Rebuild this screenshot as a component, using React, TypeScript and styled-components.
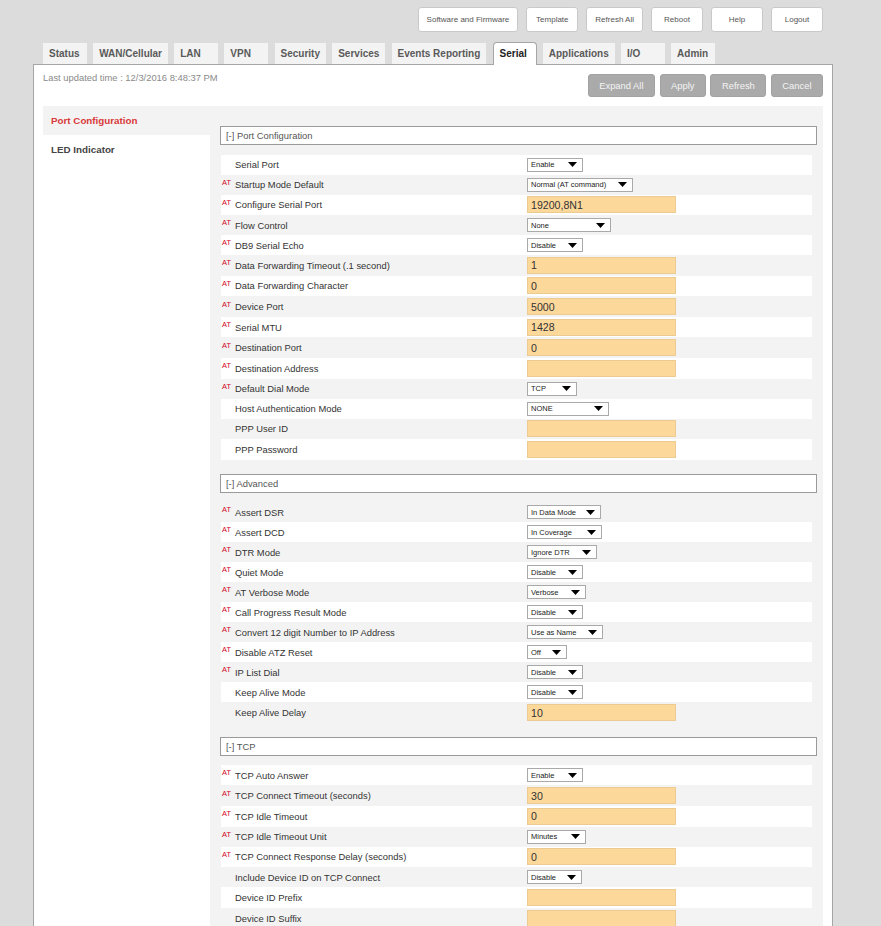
import React from "react";
import styled, { createGlobalStyle } from "styled-components";

const GlobalStyle = createGlobalStyle`
  html, body { margin: 0; padding: 0; background: #dcdcdc; }
  body { font-family: "Liberation Sans", Arial, sans-serif; }
  * { box-sizing: border-box; }
`;

const Page = styled.div`
  width: 833px;
  padding: 7px 0 0 33px;
`;

const TopBar = styled.div`
  display: flex;
  justify-content: flex-end;
  gap: 8px;
  padding-right: 10px;
`;

const TopButton = styled.div`
  height: 25px;
  min-width: 52px;
  padding: 0 8px;
  display: flex;
  align-items: center;
  justify-content: center;
  background: #fff;
  border: 1px solid #c9c9c9;
  border-radius: 3px;
  font-size: 8px;
  color: #555;
  white-space: nowrap;
`;

const Tabs = styled.div`
  display: flex;
  align-items: flex-end;
  gap: 6.2px;
  height: 22px;
  margin-top: 10px;
  padding-left: 10px;
  position: relative;
  z-index: 1;
`;

const Tab = styled.div<{ $active?: boolean }>`
  height: ${(p) => (p.$active ? "23px" : "21px")};
  margin-bottom: ${(p) => (p.$active ? "-1px" : "0")};
  min-width: 44px;
  padding: 0 6px;
  line-height: 21px;
  font-size: 10px;
  font-weight: bold;
  white-space: nowrap;
  color: ${(p) => (p.$active ? "#222" : "#5a5a5a")};
  background: ${(p) => (p.$active ? "#fff" : "#f3f3f3")};
  border: ${(p) => (p.$active ? "1px solid #a6a6a6" : "none")};
  border-bottom: none;
  border-radius: ${(p) => (p.$active ? "4px 4px 0 0" : "0")};
`;

const Panel = styled.div`
  width: 800px;
  min-height: 900px;
  background: #fff;
  border: 1px solid #a6a6a6;
  padding: 0 9px 40px;
`;

const Toolbar = styled.div`
  display: flex;
  justify-content: space-between;
  align-items: flex-start;
  padding: 9px 0;
`;

const Updated = styled.div`
  font-size: 9.4px;
  line-height: 12px;
  margin-top: -2px;
  color: #8a8a8a;
`;

const Actions = styled.div`
  display: flex;
  gap: 4.5px;
`;

const ActionButton = styled.div`
  height: 23px;
  padding: 0 10.5px;
  display: flex;
  align-items: center;
  background: #aaaaaa;
  border: 1px solid #a2a2a2;
  border-radius: 3px;
  font-size: 9.4px;
  color: #f4f4f4;
  white-space: nowrap;
`;

const Content = styled.div`
  display: flex;
  background: #f3f3f3;
  min-height: 830px;
`;

const Sidebar = styled.div`
  width: 167px;
  flex-shrink: 0;
  background: #fff;
`;

const SideItem = styled.div<{ $active?: boolean }>`
  height: 29px;
  padding-left: 8px;
  display: flex;
  align-items: center;
  font-size: 9.8px;
  font-weight: bold;
  color: ${(p) => (p.$active ? "#d93a3a" : "#444")};
  background: ${(p) => (p.$active ? "#f3f3f3" : "#fff")};
`;

const Main = styled.div`
  flex: 1;
  padding: 20px 6px 0 10px;
`;

const Section = styled.div`
  margin-bottom: 14px;
`;

const SectionHeader = styled.div`
  height: 19px;
  border: 1px solid #9a9a9a;
  background: #fff;
  padding-left: 5px;
  display: flex;
  align-items: center;
  font-size: 9.4px;
  color: #555;
`;

const Rows = styled.div`
  margin: 9.5px 5px 0 1px;
`;

const Row = styled.div<{ $h: number; $white: boolean }>`
  display: flex;
  align-items: center;
  height: ${(p) => p.$h}px;
  background: ${(p) => (p.$white ? "#fff" : "transparent")};
`;

const LabelCell = styled.div`
  width: 306px;
  flex-shrink: 0;
  display: flex;
  align-items: center;
  font-size: 9.4px;
  color: #333;
  white-space: nowrap;
`;

const AtSlot = styled.span`
  width: 14px;
  flex-shrink: 0;
  padding-left: 1px;
  margin-bottom: 4px;
  font-size: 7.4px;
  line-height: 8px;
  color: #d0021b;
`;

const ValueCell = styled.div`
  display: flex;
  align-items: center;
`;

const Dropdown = styled.div<{ $w: number }>`
  width: ${(p) => p.$w}px;
  height: 14px;
  border: 1px solid #a9a9a9;
  background: #fff;
  display: flex;
  align-items: center;
  justify-content: space-between;
  padding: 0 5px 0 3px;
  font-size: 7.5px;
  color: #222;
  white-space: nowrap;
`;

const TextField = styled.input`
  width: 149px;
  height: 17px;
  margin: 0;
  padding: 0 3px;
  border: 1px solid #eccb92;
  background: #fdd89b;
  font-family: "Liberation Sans", Arial, sans-serif;
  font-size: 10.6px;
  color: #333;
  outline: none;
`;

type Field =
  | { label: string; at: boolean; kind: "select"; value: string; w: number }
  | { label: string; at: boolean; kind: "input"; value: string };

const S = (label: string, at: boolean, value: string, w: number): Field => ({ label, at, kind: "select", value, w });
const I = (label: string, at: boolean, value: string): Field => ({ label, at, kind: "input", value });

const sections: { title: string; offset: number; fields: Field[] }[] = [
  {
    title: "[-] Port Configuration",
    offset: 0,
    fields: [
      S("Serial Port", false, "Enable", 56),
      S("Startup Mode Default", true, "Normal (AT command)", 106),
      I("Configure Serial Port", true, "19200,8N1"),
      S("Flow Control", true, "None", 84),
      S("DB9 Serial Echo", true, "Disable", 56),
      I("Data Forwarding Timeout (.1 second)", true, "1"),
      I("Data Forwarding Character", true, "0"),
      I("Device Port", true, "5000"),
      I("Serial MTU", true, "1428"),
      I("Destination Port", true, "0"),
      I("Destination Address", true, ""),
      S("Default Dial Mode", true, "TCP", 50),
      S("Host Authentication Mode", false, "NONE", 82),
      I("PPP User ID", false, ""),
      I("PPP Password", false, ""),
    ],
  },
  {
    title: "[-] Advanced",
    offset: 1,
    fields: [
      S("Assert DSR", true, "In Data Mode", 74),
      S("Assert DCD", true, "In Coverage", 75),
      S("DTR Mode", true, "Ignore DTR", 70),
      S("Quiet Mode", true, "Disable", 56),
      S("AT Verbose Mode", true, "Verbose", 59),
      S("Call Progress Result Mode", true, "Disable", 56),
      S("Convert 12 digit Number to IP Address", true, "Use as Name", 76),
      S("Disable ATZ Reset", true, "Off", 40),
      S("IP List Dial", true, "Disable", 56),
      S("Keep Alive Mode", false, "Disable", 56),
      I("Keep Alive Delay", false, "10"),
    ],
  },
  {
    title: "[-] TCP",
    offset: 0,
    fields: [
      S("TCP Auto Answer", true, "Enable", 56),
      I("TCP Connect Timeout (seconds)", true, "30"),
      I("TCP Idle Timeout", true, "0"),
      S("TCP Idle Timeout Unit", true, "Minutes", 59),
      I("TCP Connect Response Delay (seconds)", true, "0"),
      S("Include Device ID on TCP Connect", false, "Disable", 55),
      I("Device ID Prefix", false, ""),
      I("Device ID Suffix", false, ""),
    ],
  },
];

const Arrow = () => (
  <svg width="9" height="5" viewBox="0 0 9 5">
    <polygon points="0,0 9,0 4.5,5" fill="#000" />
  </svg>
);

const topButtons = ["Software and Firmware", "Template", "Refresh All", "Reboot", "Help", "Logout"];
const tabs = ["Status", "WAN/Cellular", "LAN", "VPN", "Security", "Services", "Events Reporting", "Serial", "Applications", "I/O", "Admin"];
const actions = ["Expand All", "Apply", "Refresh", "Cancel"];

export default function App() {
  return (
    <>
      <GlobalStyle />
      <Page>
        <TopBar>
          {topButtons.map((b) => (
            <TopButton key={b}>{b}</TopButton>
          ))}
        </TopBar>
        <Tabs>
          {tabs.map((t) => (
            <Tab key={t} $active={t === "Serial"}>
              {t}
            </Tab>
          ))}
        </Tabs>
        <Panel>
          <Toolbar>
            <Updated>Last updated time : 12/3/2016 8:48:37 PM</Updated>
            <Actions>
              {actions.map((a) => (
                <ActionButton key={a}>{a}</ActionButton>
              ))}
            </Actions>
          </Toolbar>
          <Content>
            <Sidebar>
              <SideItem $active>Port Configuration</SideItem>
              <SideItem>LED Indicator</SideItem>
            </Sidebar>
            <Main>
              {sections.map((sec) => (
                <Section key={sec.title}>
                  <SectionHeader>{sec.title}</SectionHeader>
                  <Rows>
                    {sec.fields.map((f, i) => (
                      <Row key={f.label} $h={f.kind === "input" ? 20.6 : 20} $white={(i + sec.offset) % 2 === 0}>
                        <LabelCell>
                          <AtSlot>{f.at ? "AT" : ""}</AtSlot>
                          {f.label}
                        </LabelCell>
                        <ValueCell>
                          {f.kind === "select" ? (
                            <Dropdown $w={f.w}>
                              <span>{f.value}</span>
                              <Arrow />
                            </Dropdown>
                          ) : (
                            <TextField readOnly value={f.value} />
                          )}
                        </ValueCell>
                      </Row>
                    ))}
                  </Rows>
                </Section>
              ))}
            </Main>
          </Content>
        </Panel>
      </Page>
    </>
  );
}
